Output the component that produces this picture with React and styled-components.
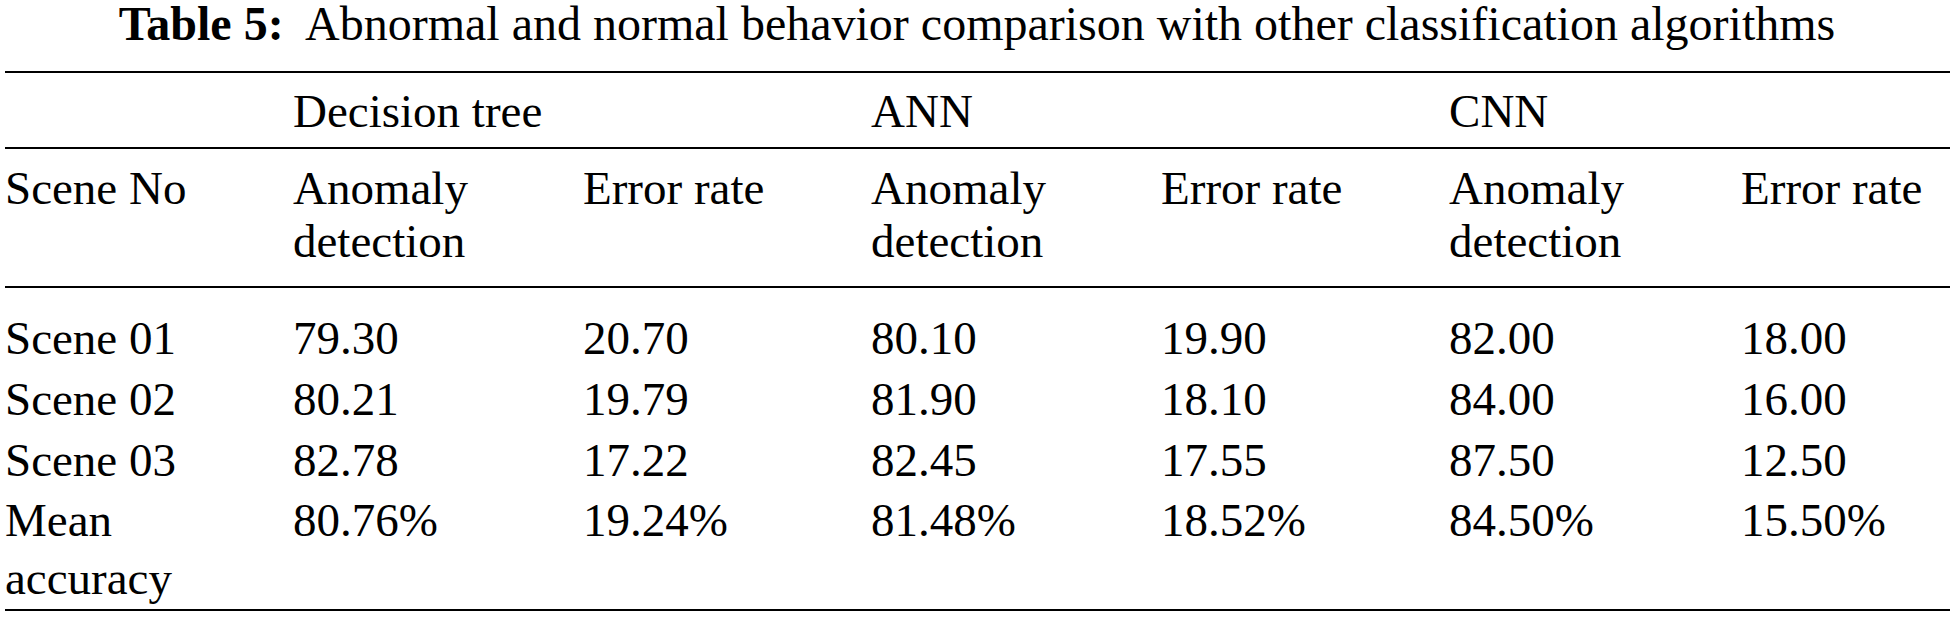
import React from 'react'
import styled, { createGlobalStyle } from 'styled-components'

const serif = `"Liberation Serif", "Times New Roman", serif`

const GlobalStyle = createGlobalStyle`
  html, body {
    margin: 0;
    padding: 0;
    background: #ffffff;
  }
  body {
    font-family: ${serif};
    color: #000000;
  }
`

const Page = styled.div`
  width: 1954px;
  height: 617px;
  overflow: hidden;
  background: #ffffff;
  font-family: ${serif};
`

const Caption = styled.div`
  text-align: center;
  font-size: 48px;
  line-height: 48px;
  height: 71px;
  white-space: pre;
`

const CaptionLabel = styled.span`
  font-weight: 700;
`

const Table = styled.table`
  border-collapse: separate;
  border-spacing: 0;
  margin-left: 5px;
  width: 1945px;
  table-layout: fixed;
  font-family: ${serif};
  font-size: 47px;
  color: #000;
  border-top: 2px solid #000;
  border-bottom: 2px solid #000;
`

const Col = styled.col`
  width: ${p => p.$w}px;
`

const GroupCell = styled.td`
  padding: 13px 10px 11px 0;
  line-height: 50px;
  vertical-align: top;
  text-align: left;
  border-bottom: 2px solid #000;
`

const HeadCell = styled.td`
  padding: 13px 10px 18px 0;
  line-height: 53px;
  vertical-align: top;
  text-align: left;
  border-bottom: 2px solid #000;
`

const SpacerCell = styled.td`
  height: 20px;
  padding: 0;
`

const DataCell = styled.td`
  padding: 0 10px ${p => (p.$last ? 2 : 0)}px 0;
  line-height: ${p => (p.$last ? 58 : 61)}px;
  vertical-align: top;
  text-align: left;
`

const widths = [288, 290, 288, 290, 288, 292, 209]

const groups = [
  { label: '', span: 1 },
  { label: 'Decision tree', span: 2 },
  { label: 'ANN', span: 2 },
  { label: 'CNN', span: 2 },
]

const heads = ['Scene No', 'Anomaly detection', 'Error rate', 'Anomaly detection', 'Error rate', 'Anomaly detection', 'Error rate']

const rows = [
  ['Scene 01', '79.30', '20.70', '80.10', '19.90', '82.00', '18.00'],
  ['Scene 02', '80.21', '19.79', '81.90', '18.10', '84.00', '16.00'],
  ['Scene 03', '82.78', '17.22', '82.45', '17.55', '87.50', '12.50'],
  ['Mean accuracy', '80.76%', '19.24%', '81.48%', '18.52%', '84.50%', '15.50%'],
]

export default function App() {
  return (
    <Page>
      <GlobalStyle />
      <Caption>
        <CaptionLabel>Table 5:</CaptionLabel>{'  '}Abnormal and normal behavior comparison with other classification algorithms
      </Caption>
      <Table>
        <colgroup>
          {widths.map((w, i) => <Col key={i} $w={w} />)}
        </colgroup>
        <tbody>
          <tr>
            {groups.map((g, i) => <GroupCell key={i} colSpan={g.span}>{g.label}</GroupCell>)}
          </tr>
          <tr>
            {heads.map((h, i) => <HeadCell key={i}>{h}</HeadCell>)}
          </tr>
          <tr>
            <SpacerCell colSpan={7} />
          </tr>
          {rows.map((r, ri) => (
            <tr key={ri}>
              {r.map((c, ci) => (
                <DataCell key={ci} $last={ri === rows.length - 1}>{c}</DataCell>
              ))}
            </tr>
          ))}
        </tbody>
      </Table>
    </Page>
  )
}
